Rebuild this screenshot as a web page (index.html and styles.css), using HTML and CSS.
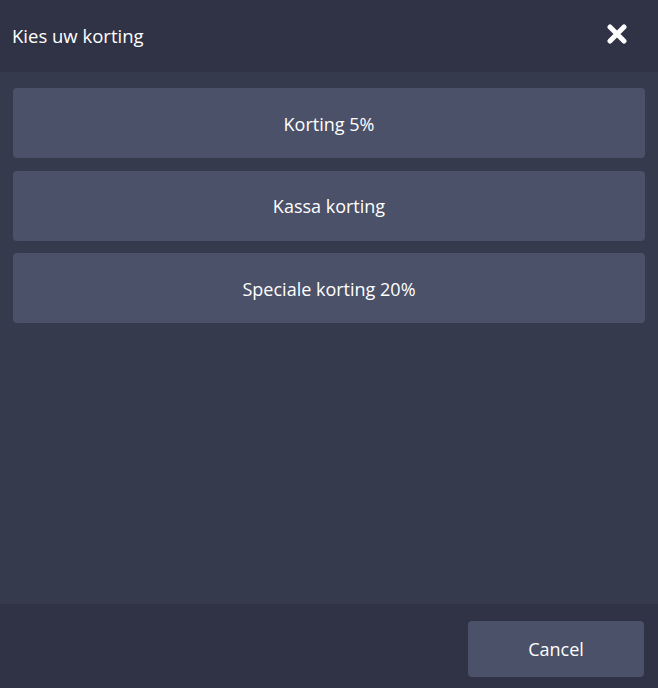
FILE: index.html
```html
<!DOCTYPE html>
<html lang="nl">

<head>
    <meta charset="UTF-8">
    <meta name="viewport" content="width=device-width, initial-scale=1.0">
    <title>Kies uw korting</title>
    <link rel="stylesheet" href="styles.css">
</head>

<body>
    <div class="modal">
        <div class="modal-header">
            <h1>Kies uw korting</h1>
            <button class="close" aria-label="Sluiten">
                <svg width="20" height="20" viewBox="0 0 20 20">
                    <path d="M3 3 L17 17 M17 3 L3 17" stroke="#fff" stroke-width="5" stroke-linecap="round" />
                </svg>
            </button>
        </div>
        <div class="modal-body">
            <button class="option">Korting 5%</button>
            <button class="option">Kassa korting</button>
            <button class="option">Speciale korting 20%</button>
        </div>
        <div class="modal-footer">
            <button class="cancel">Cancel</button>
        </div>
    </div>
</body>

</html>
```

FILE: styles.css
```css
body {
    font-family: 'Open Sans', 'Noto Sans', sans-serif;
    margin: 0;
    padding: 0;
    background-color: #363a4d;
    color: #fff;
}

.modal {
    height: 688px;
    display: flex;
    flex-direction: column;
}

.modal-header {
    height: 72px;
    background-color: #303345;
    display: flex;
    align-items: center;
    justify-content: space-between;
    padding: 0 31px 0 12px;
    box-sizing: border-box;
}

h1 {
    font-size: 18.5px;
    font-weight: normal;
    margin: 0;
    padding-bottom: 2px;
}

.close {
    background: none;
    border: none;
    padding: 0;
    margin-bottom: 4px;
    width: 20px;
    height: 20px;
    cursor: pointer;
    display: flex;
}

.modal-body {
    flex: 1;
    padding: 16px 13px;
    display: flex;
    flex-direction: column;
    gap: 12.5px;
}

button {
    font-family: inherit;
    color: #fff;
}

.option,
.cancel {
    background-color: #4b5168;
    border: none;
    border-radius: 4px;
    font-size: 18px;
    cursor: pointer;
}

.option {
    height: 70px;
    flex-shrink: 0;
    width: 100%;
    padding-top: 2px;
}

.modal-footer {
    height: 84px;
    background-color: #303345;
    display: flex;
    justify-content: flex-end;
    align-items: flex-start;
    padding: 17px 14px 0 0;
    box-sizing: border-box;
}

.cancel {
    width: 176px;
    height: 56px;
}
```
